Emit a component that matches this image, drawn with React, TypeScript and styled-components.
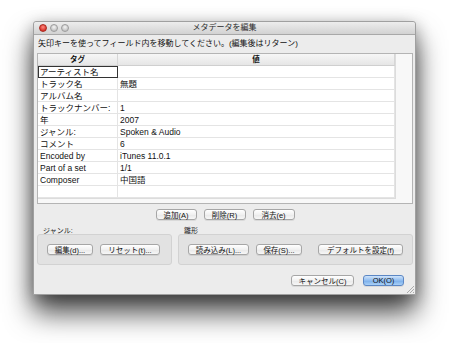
import React from 'react';
import styled, { createGlobalStyle } from 'styled-components';

const GlobalStyle = createGlobalStyle`
  html, body {
    margin: 0;
    padding: 0;
    background: #ffffff;
    font-family: "Liberation Sans", "Noto Sans CJK JP", sans-serif;
  }
`;

const rows: [string, string][] = [
  ['アーティスト名', ''],
  ['トラック名', '無題'],
  ['アルバム名', ''],
  ['トラックナンバー:', '1'],
  ['年', '2007'],
  ['ジャンル:', 'Spoken & Audio'],
  ['コメント', '6'],
  ['Encoded by', 'iTunes 11.0.1'],
  ['Part of a set', '1/1'],
  ['Composer', '中国語'],
  ['', ''],
];

export default function App() {
  return (
    <>
      <GlobalStyle />
      <Page>
        <Window>
          <TitleBar>
            <Lights>
              <Light $color="red" />
              <Light $color="gray" />
              <Light $color="gray" />
            </Lights>
            <Title>メタデータを編集</Title>
            <span />
          </TitleBar>
          <Instruction>矢印キーを使ってフィールド内を移動してください。(編集後はリターン)</Instruction>
          <TablePane>
            <Grid>
              <HeadCell>タグ</HeadCell>
              <HeadCell>値</HeadCell>
              {rows.map(([tag, value], i) => (
                <React.Fragment key={i}>
                  <Cell $editing={i === 0}>{tag}</Cell>
                  <Cell>{value}</Cell>
                </React.Fragment>
              ))}
            </Grid>
          </TablePane>
          <ButtonRow>
            <Button $w={41}>追加(A)</Button>
            <Button $w={42}>削除(R)</Button>
            <Button $w={42}>消去(e)</Button>
          </ButtonRow>
          <Groups>
            <Group $w={135}>
              <GroupLabel>ジャンル:</GroupLabel>
              <GroupBox>
                <Button $w={46}>編集(d)...</Button>
                <Button $w={60}>リセット(t)...</Button>
              </GroupBox>
            </Group>
            <Group $w={235}>
              <GroupLabel>雛形</GroupLabel>
              <GroupBox>
                <Button $w={61}>読み込み(L)...</Button>
                <Button $w={46}>保存(S)...</Button>
                <Spacer />
                <Button $w={85}>デフォルトを設定(f)</Button>
              </GroupBox>
            </Group>
          </Groups>
          <Footer>
            <Button $w={63}>キャンセル(C)</Button>
            <Button $w={41} $primary>OK(O)</Button>
          </Footer>
          <Grip width="8" height="8" viewBox="0 0 8 8">
            <path d="M1 8 L8 1 M4 8 L8 4 M7 8 L8 7" stroke="#9a9a9a" strokeWidth="0.8" />
          </Grip>
        </Window>
      </Page>
    </>
  );
}

// ------------ styles ------------
const Page = styled.div`
  height: 343px;
  box-sizing: border-box;
  overflow: hidden;
  padding: 21px 0 0 33px;
  background: #ffffff;
`;

const Window = styled.div`
  position: relative;
  width: 383px;
  height: 274px;
  box-sizing: border-box;
  display: flex;
  flex-direction: column;
  background: #ececec;
  border: 1px solid #a0a0a0;
  border-radius: 3px 3px 0 0;
  box-shadow: 0 18px 28px rgba(0, 0, 0, 0.7), 0 4px 16px rgba(0, 0, 0, 0.3);
`;

const TitleBar = styled.div`
  height: 12px;
  display: grid;
  grid-template-columns: 1fr auto 1fr;
  align-items: center;
  padding: 0 4px;
  background: linear-gradient(#ededed, #d2d2d2);
  border-bottom: 1px solid #a8a8a8;
  border-radius: 3px 3px 0 0;
`;

const Lights = styled.div`
  display: flex;
  gap: 3px;
  padding-left: 1px;
`;

const Light = styled.span<{ $color: 'red' | 'gray' }>`
  width: 8px;
  height: 8px;
  border-radius: 50%;
  box-sizing: border-box;
  background: ${(p) =>
    p.$color === 'red'
      ? 'radial-gradient(circle at 50% 35%, #ff8a80, #d8342c 70%)'
      : 'radial-gradient(circle at 50% 35%, #f4f4f4, #c4c4c4 70%)'};
  border: 0.5px solid ${(p) => (p.$color === 'red' ? '#a8281f' : '#9c9c9c')};
`;

const Title = styled.div`
  font-size: 8px;
  color: #2a2a2a;
  line-height: 12px;
`;

const Instruction = styled.div`
  font-size: 8px;
  color: #111;
  padding: 3px 4px 0;
  height: 16px;
  box-sizing: border-box;
  line-height: 11px;
`;

const TablePane = styled.div`
  margin: 2px 2px 0 3px;
  height: 151px;
  box-sizing: border-box;
  border: 1px solid #b4b4b4;
  background: #f8f8f8;
  overflow: hidden;
`;

const Grid = styled.div`
  width: 357px;
  display: grid;
  grid-template-columns: 80px 1fr;
  grid-auto-rows: 12px;
  background: #ffffff;
  border-right: 1px solid #dcdcdc;
  border-bottom: 1px solid #dcdcdc;
`;

const HeadCell = styled.div`
  font-size: 7.5px;
  font-weight: bold;
  text-align: center;
  line-height: 11px;
  color: #111;
  background: linear-gradient(#f6f6f6, #e6e6e6);
  border-bottom: 1px solid #cfcfcf;
  border-right: 1px solid #d6d6d6;
`;

const Cell = styled.div<{ $editing?: boolean }>`
  font-size: 8.5px;
  line-height: 10px;
  padding: 1px 2px 0;
  color: #111;
  white-space: nowrap;
  box-sizing: border-box;
  border-bottom: 1px solid #e4e4e4;
  border-right: 1px solid #e4e4e4;
  ${(p) => (p.$editing ? 'border: 1px solid #333; padding: 0 1px;' : '')}
`;

const Button = styled.div<{ $w: number; $primary?: boolean }>`
  width: ${(p) => p.$w}px;
  height: 11px;
  box-sizing: border-box;
  display: flex;
  align-items: center;
  justify-content: center;
  font-size: 7.5px;
  white-space: nowrap;
  color: #111;
  border-radius: 3px;
  border: 1px solid ${(p) => (p.$primary ? '#5c87c4' : '#a6a6a6')};
  background: ${(p) =>
    p.$primary
      ? 'linear-gradient(#cfe4fb, #8fbcf0 50%, #78adea 51%, #a9d0f7)'
      : 'linear-gradient(#ffffff, #f1f1f1 50%, #e8e8e8 51%, #f7f7f7)'};
  box-shadow: 0 1px 0 rgba(0, 0, 0, 0.08);
`;

const ButtonRow = styled.div`
  display: flex;
  justify-content: center;
  gap: 7px;
  margin-top: 5px;
  padding-left: 1px;
`;

const Groups = styled.div`
  display: flex;
  gap: 6px;
  margin: 8px 0 0 3px;
`;

const Group = styled.div<{ $w: number }>`
  width: ${(p) => p.$w}px;
  display: flex;
  flex-direction: column;
`;

const GroupLabel = styled.div`
  font-size: 7px;
  color: #222;
  line-height: 8px;
  padding-left: 6px;
  height: 7px;
  margin-top: -1px;
`;

const GroupBox = styled.div`
  height: 31px;
  box-sizing: border-box;
  display: flex;
  align-items: center;
  gap: 7px;
  padding: 0 9px 0 9px;
  background: #e2e2e2;
  border: 1px solid #d2d2d2;
  border-radius: 3px;
`;

const Spacer = styled.div`
  flex: 1;
`;

const Footer = styled.div`
  display: flex;
  justify-content: flex-end;
  gap: 9px;
  margin-top: 10px;
  padding-right: 11px;
`;

const Grip = styled.svg`
  position: absolute;
  right: 1px;
  bottom: 1px;
`;
